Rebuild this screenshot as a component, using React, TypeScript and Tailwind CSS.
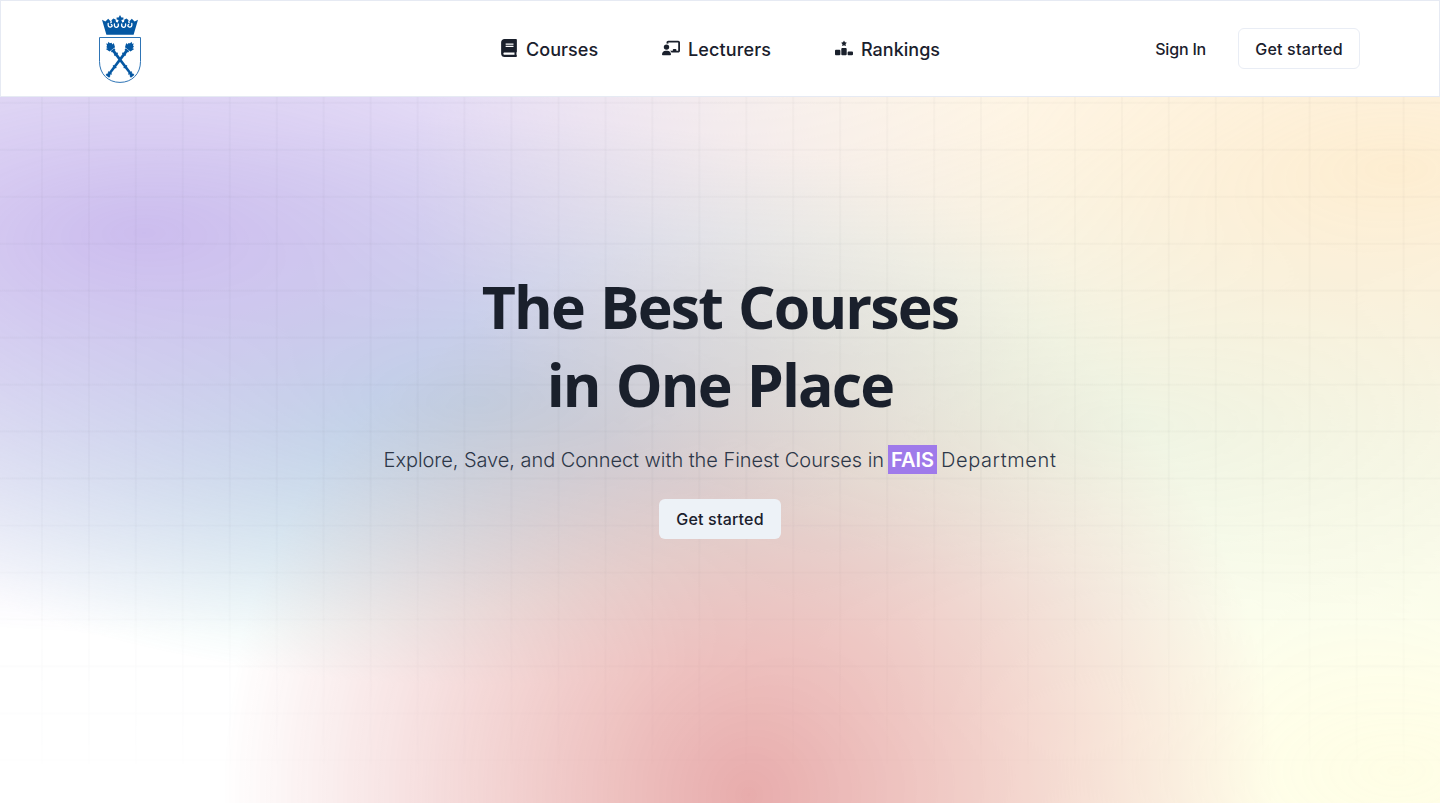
import { FaBook } from "react-icons/fa";
import { FaChalkboardUser, FaRankingStar } from "react-icons/fa6";

const navItems = [
  { label: "Courses", Icon: FaBook, box: "w-[98px]", text: "tracking-[0.05px]" },
  { label: "Lecturers", Icon: FaChalkboardUser, box: "w-[109px]", text: "tracking-[0.12px]" },
  { label: "Rankings", Icon: FaRankingStar, box: "w-[105px]", text: "tracking-[0.02px]" },
];

function Mace() {
  return (
    <g>
      <path d="M-1.4 -11 L1.4 -11 L1.2 20 L-1.2 20Z" />
      <path d="M-3.4 -18 L-1.8 -19.2 L-1.4 -21.2 L0 -20 L1.4 -21.2 L1.8 -19.2 L3.4 -18.6 L3.1 -16.6 L5 -17 L3.4 -12.8 L-3.4 -12.8 L-5 -17 L-3.1 -16.6Z" />
      <path d="M-2.2 -12.4H2.2V-10.4H-2.2Z M-2.1 -7.5H2.1V-6H-2.1Z M-2.1 8.2H2.1V9.6H-2.1Z M-2.2 16.2H2.2V17.6H-2.2Z M-2.2 18.6H2.2V21H-2.2Z" />
    </g>
  );
}

function Crest() {
  return (
    <svg viewBox="0 0 42 68" className="ml-[19px] h-[68px] w-[42px]" fill="#0558a3" aria-hidden="true">
      <path d="M7.4 19.8 L3 4.8 L6.4 6.6 L9.2 3.8 L11.6 6.2 L11 8.6 L13 7.4 L12.4 5.2 L14.4 3.4 L16.6 4.6 L17 7 L18.8 7.4 L19.6 5 L17.6 4.6 L17.6 2.6 L19.6 2.4 L21 0 L22.4 2.4 L24.4 2.6 L24.4 4.6 L22.4 5 L23.2 7.4 L25 7 L25.4 4.6 L27.6 3.4 L29.6 5.2 L29 7.4 L31 8.6 L30.4 6.2 L32.8 3.8 L35.6 6.6 L39 4.8 L34.6 19.8Z" />
      <g fill="none" stroke="white" strokeWidth="1.3" strokeLinecap="round">
        <path d="M9.2 8.4Q8.6 12.4 11.8 12Q14.2 11 12.4 9.4" />
        <path d="M15.4 8.8Q15 12.6 17.8 12.3Q20 11.6 19.2 9" />
        <path d="M32.8 8.4Q33.4 12.4 30.2 12Q27.8 11 29.6 9.4" />
        <path d="M26.6 8.8Q27 12.6 24.2 12.3Q22 11.6 22.8 9" />
      </g>
      <path
        d="M.5 22.5H41.5V46.5C41.5 58.8 33 67.4 21 67.4S.5 58.8 .5 46.5Z"
        fill="none"
        stroke="#2e74b5"
        strokeWidth="1"
      />
      <g transform="translate(21 44.6) rotate(-37)">
        <Mace />
      </g>
      <g transform="translate(21 44.6) rotate(37)">
        <Mace />
      </g>
    </svg>
  );
}

export default function App() {
  return (
    <div className="relative isolate flex h-[803px] w-full flex-col overflow-hidden bg-white font-['Inter',sans-serif] text-[#1a202c]">
      <div className="absolute inset-0 -z-10 opacity-40 bg-[radial-gradient(at_97%_21%,#fbd38d_0px,transparent_50%),radial-gradient(at_52%_99%,#c53030_0px,transparent_50%),radial-gradient(at_10%_29%,#805ad5_0px,transparent_50%),radial-gradient(at_97%_96%,#fefcbf_0px,transparent_50%),radial-gradient(at_33%_50%,#38b2ac_0px,transparent_50%),radial-gradient(at_79%_53%,#a6e6dc_0px,transparent_50%)]" />
      <div className="absolute inset-x-0 top-0 -z-10 h-[764px] bg-[linear-gradient(to_right,rgba(45,55,72,0.022)_2px,transparent_2px),linear-gradient(to_bottom,rgba(45,55,72,0.022)_2px,transparent_2px)] bg-size-[46.96px_46.96px] bg-position-[41px_8px] mask-[linear-gradient(to_bottom,black_60%,rgba(0,0,0,0.2)_100%)]" />

      <header className="flex h-[97px] shrink-0 items-center border border-[#e6eaf3] bg-white px-[79px]">
        <div className="flex flex-1">
          <Crest />
        </div>
        <nav className="flex items-center gap-16">
          {navItems.map(({ label, Icon, box, text }) => (
            <a key={label} className={`flex h-7 items-center gap-2 whitespace-nowrap text-[18px] font-medium ${box}`}>
              <Icon className="mb-[2px] size-[18px] shrink-0" />
              <span className={`pt-[2px] ${text}`}>{label}</span>
            </a>
          ))}
        </nav>
        <div className="flex flex-1 items-center justify-end gap-8 text-base font-medium">
          <a className="whitespace-nowrap tracking-[-0.2px]">Sign In</a>
          <button className="h-[41px] w-[122px] whitespace-nowrap rounded-md border border-[#e9edf5] tracking-[0.2px]">Get started</button>
        </div>
      </header>

      <main className="flex flex-col items-center pt-[170px]">
        <h1 className="text-center font-['Open_Sans','Noto_Sans',sans-serif] text-[59px] leading-[78px] font-bold tracking-[-1.85px] [word-spacing:2.5px]">
          <span className="block">The Best Courses</span>
          <span className="block">in One Place</span>
        </h1>
        <p className="mt-[21px] flex h-[30px] items-center whitespace-nowrap text-[20px] font-light text-[#2d3748]">
          <span className="pt-[2px] tracking-[-0.05px]">Explore, Save, and Connect with the Finest Courses in</span>
          <mark className="mx-1 flex h-[29px] w-[49px] items-center justify-center bg-[#9f7aea] pt-px font-semibold text-white">FAIS</mark>
          <span className="pt-[2px] tracking-[0.6px]">Department</span>
        </p>
        <button className="mt-[25px] h-10 w-[122px] whitespace-nowrap rounded-md bg-[#edf2f7] text-base font-medium tracking-[0.2px]">
          Get started
        </button>
      </main>
    </div>
  );
}
